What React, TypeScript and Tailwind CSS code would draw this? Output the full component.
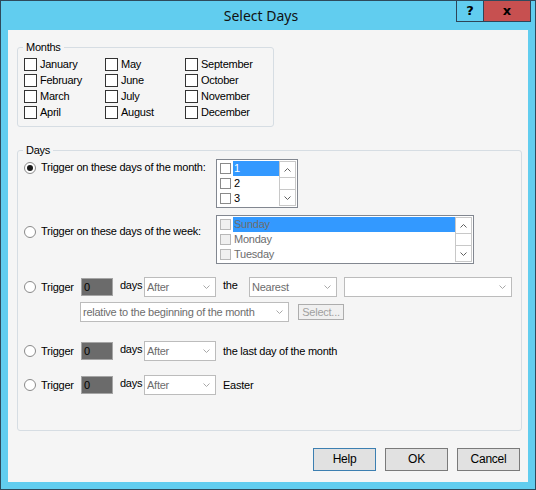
import React from "react";

const base =
  "font-['Liberation_Sans',Arial,sans-serif] text-[11px] leading-[13px] tracking-[-0.25px] text-black";

function Chevron({ dir = "down", color = "#a8a8a8" }: { dir?: "up" | "down"; color?: string }) {
  return (
    <svg width="7" height="4" viewBox="0 0 7 4" className="shrink-0">
      <polyline
        points={dir === "down" ? "0.5,0.5 3.5,3.5 6.5,0.5" : "0.5,3.5 3.5,0.5 6.5,3.5"}
        fill="none"
        stroke={color}
        strokeWidth="1"
      />
    </svg>
  );
}

function MonthCheck({ label }: { label: string }) {
  return (
    <div className="flex items-center h-[16px]">
      <span className="block w-[13px] h-[13px] border border-[#333333] bg-white shrink-0" />
      <span className="ml-[3px]">{label}</span>
    </div>
  );
}

function Radio({ checked = false }: { checked?: boolean }) {
  return (
    <span className="flex items-center justify-center w-[12px] h-[12px] rounded-full border border-[#8a8a8a] bg-white shrink-0">
      {checked && <span className="block w-[6px] h-[6px] rounded-full bg-[#1a1a1a]" />}
    </span>
  );
}

function ScrollBar() {
  return (
    <div className="flex flex-col w-[17px] h-[45px] shrink-0">
      <div className="h-[17px] border border-[#c8c8c8] bg-white flex items-center justify-center">
        <Chevron dir="up" color="#606060" />
      </div>
      <div className="flex-1 border-x border-[#c8c8c8] bg-white" />
      <div className="h-[17px] border border-[#c8c8c8] bg-white flex items-center justify-center">
        <Chevron dir="down" color="#606060" />
      </div>
    </div>
  );
}

function ListBox({
  items,
  disabled = false,
  widthClass,
}: {
  items: string[];
  disabled?: boolean;
  widthClass: string;
}) {
  return (
    <div className={`flex h-[49px] border border-[#828790] bg-white p-[1px] ${widthClass}`}>
      <div className="flex-1 flex flex-col">
        {items.map((it, i) => (
          <div key={it} className="flex items-center h-[15px]">
            <span
              className={`block ml-[2px] w-[11px] h-[11px] border shrink-0 ${
                disabled ? "border-[#b8b8b8] bg-[#f0f0f0]" : "border-[#8a8a8a] bg-white"
              }`}
            />
            <span
              className={`ml-[2px] flex-1 h-[15px] pl-[1px] flex items-center ${
                i === 0 ? "bg-[#3399ff]" : ""
              } ${disabled ? "text-[#6d6d6d]" : i === 0 ? "text-white" : "text-black"}`}
            >
              {it}
            </span>
          </div>
        ))}
      </div>
      <ScrollBar />
    </div>
  );
}

function Combo({ widthClass, text = "" }: { widthClass: string; text?: string }) {
  return (
    <div
      className={`flex items-center h-[20px] border border-[#bcbcbc] bg-white pl-[2px] pr-[5px] shrink-0 ${widthClass}`}
    >
      <span className="flex-1 text-[#6d6d6d] whitespace-nowrap overflow-hidden">{text}</span>
      <Chevron color="#a8a8a8" />
    </div>
  );
}

function Edit() {
  return (
    <div className="flex items-center w-[32px] h-[18px] bg-[#6b6b6b] border border-[#a5a5a5] pl-[2px] shrink-0">
      0
    </div>
  );
}

function TriggerStart() {
  return (
    <>
      <Radio />
      <span className="ml-[5px] w-[40px] shrink-0">Trigger</span>
      <Edit />
      <span className="ml-[7px] w-[24px] shrink-0 -mt-[3px]">days</span>
      <Combo widthClass="w-[72px]" text="After" />
    </>
  );
}

function Button({ label, focused = false }: { label: string; focused?: boolean }) {
  return (
    <div
      className={`flex items-center justify-center w-[63px] h-[23px] bg-[#e1e1e1] border ${
        focused ? "border-[#3c7fb1]" : "border-[#7a7a7a]"
      }`}
    >
      {label}
    </div>
  );
}

export default function App() {
  const months = [
    ["January", "May", "September"],
    ["February", "June", "October"],
    ["March", "July", "November"],
    ["April", "August", "December"],
  ];
  return (
    <div className="w-[536px] h-[490px] border border-[#2e4a5c] bg-[#61cdef] flex flex-col">
      {/* title bar */}
      <div className="flex h-[29px] shrink-0">
        <div className="flex-1 flex items-center justify-center pl-[65px] font-['Noto_Sans','Open_Sans',sans-serif] text-[14px] leading-[20px] text-[#111]">
          Select Days
        </div>
        <div className="flex h-[21px] border-x border-b border-[#2e4458] mr-[4px] font-['DejaVu_Sans',sans-serif] font-bold text-[13px] text-black">
          <div className="w-[27px] flex items-center justify-center border-r border-[#2e4458]">?</div>
          <div className="w-[46px] flex items-center justify-center bg-[#c75050]">x</div>
        </div>
      </div>

      {/* client */}
      <div className="flex-1 mx-[7px] mb-[7px] bg-[#f5f5f5] flex flex-col">
        <div className={base + " flex flex-col"}>
          {/* Months */}
          <fieldset className="ml-[9px] mt-[11px] w-[257px] h-[86px] border border-[#d6dde3] rounded-[3px] px-[6px]">
            <legend className="-ml-[1px] px-[3px] leading-[13px]">Months</legend>
            <div className="grid grid-cols-[81px_80px_80px] pt-[2px]">
              {months.map((row) =>
                row.map((m) => <MonthCheck key={m} label={m} />)
              )}
            </div>
          </fieldset>

          {/* Days */}
          <fieldset className="ml-[9px] mt-[17px] w-[505px] h-[287px] border border-[#d6dde3] rounded-[3px] px-[6px]">
            <legend className="-ml-[1px] px-[3px] leading-[13px]">Days</legend>
            <div className="flex flex-col pt-[2px]">
              <div className="flex items-start">
                <div className="w-[192px] flex items-center h-[15px] mt-[1px] shrink-0">
                  <Radio checked />
                  <span className="ml-[5px]">Trigger on these days of the month:</span>
                </div>
                <ListBox items={["1", "2", "3"]} widthClass="w-[82px]" />
              </div>

              <div className="flex items-start mt-[7px]">
                <div className="w-[192px] flex items-center h-[15px] mt-[9px] shrink-0">
                  <Radio />
                  <span className="ml-[5px]">Trigger on these days of the week:</span>
                </div>
                <ListBox items={["Sunday", "Monday", "Tuesday"]} disabled widthClass="w-[258px]" />
              </div>

              <div className="flex items-center h-[20px] mt-[13px]">
                <TriggerStart />
                <span className="ml-[7px] w-[26px] shrink-0 -mt-[3px]">the</span>
                <Combo widthClass="w-[88px]" text="Nearest" />
                <Combo widthClass="w-[168px] ml-[7px]" />
              </div>

              <div className="flex items-center h-[20px] mt-[5px] pl-[56px]">
                <Combo widthClass="w-[209px]" text="relative to the beginning of the month" />
                <div className="ml-[9px] w-[46px] h-[16px] border border-[#adadad] bg-[#f0f0f0] text-[#a0a0a0] flex items-center justify-center">
                  Select...
                </div>
              </div>

              <div className="flex items-center h-[20px] mt-[19px]">
                <TriggerStart />
                <span className="ml-[7px] shrink-0">the last day of the month</span>
              </div>

              <div className="flex items-center h-[20px] mt-[14px]">
                <TriggerStart />
                <span className="ml-[7px] shrink-0">Easter</span>
              </div>
            </div>
          </fieldset>

          {/* Buttons */}
          <div className="flex justify-end gap-[9px] pr-[8px] mt-[17px] text-[12px]">
            <Button label="Help" focused />
            <Button label="OK" />
            <Button label="Cancel" />
          </div>
        </div>
      </div>
    </div>
  );
}
